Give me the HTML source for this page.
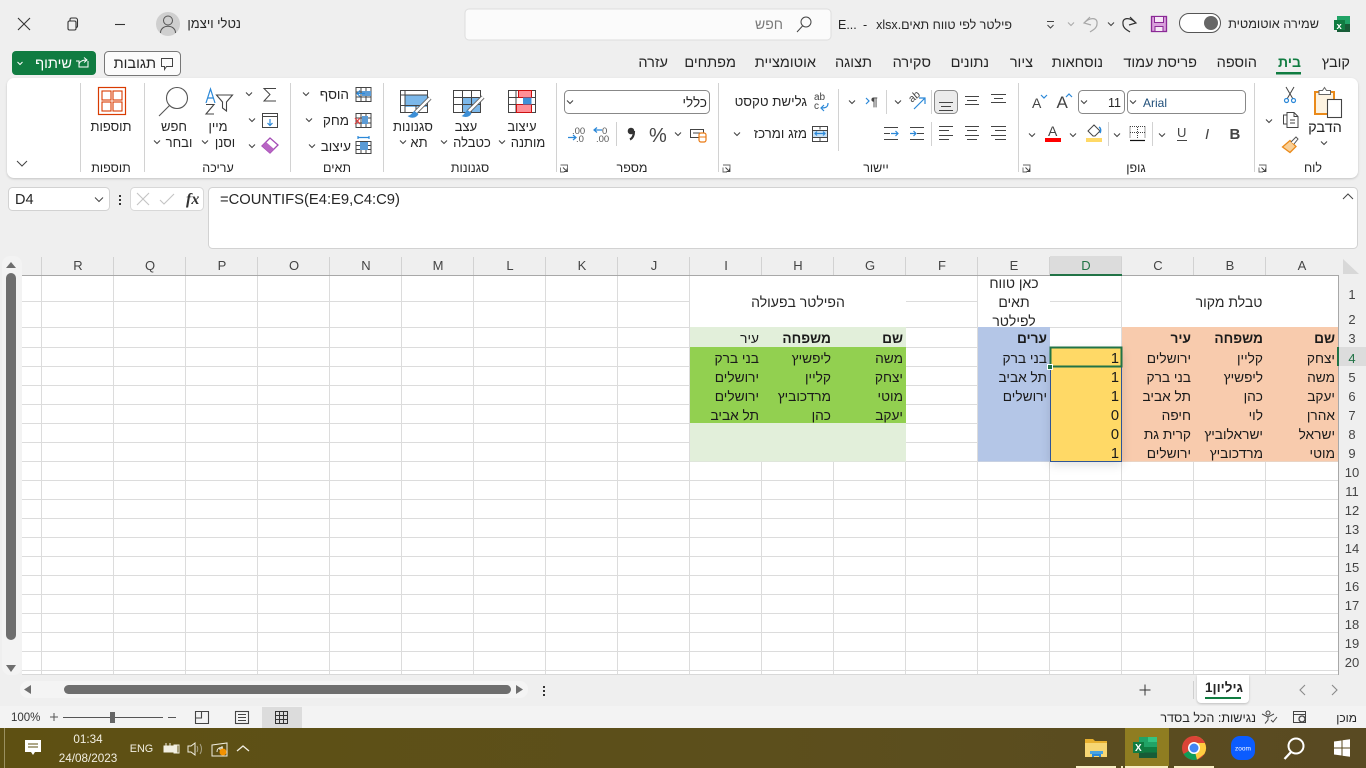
<!DOCTYPE html>
<html lang="he"><head><meta charset="utf-8"><title>Excel</title>
<style>
html,body{margin:0;padding:0;background:#efefef;width:1366px;height:768px;overflow:hidden}
svg{display:block;position:absolute;left:0;top:0}
text{font-family:"Liberation Sans","Noto Sans CJK SC",sans-serif;font-size:13px;fill:#262626;white-space:pre}
.r{direction:rtl;text-anchor:start}
.m{direction:rtl;text-anchor:middle}
.c{font-size:13.700px;fill:#1a1a1a;direction:rtl;text-anchor:start}
.n{font-size:14.700px;fill:#1a1a1a;direction:ltr;text-anchor:end}
.b{font-weight:bold}
.h{font-size:13px;fill:#444;text-anchor:middle;direction:ltr}
.t{font-size:14.500px;direction:rtl;text-anchor:start}
.l{font-size:12.500px;direction:rtl;text-anchor:middle}
.k{fill:none;stroke:#444;stroke-width:1}
.d{fill:none;stroke:#444;stroke-width:1.100}
.bl{fill:none;stroke:#2b88d8;stroke-width:1.200}
.w{font-size:11.700px;fill:#f2efe2;text-anchor:middle;direction:ltr}
</style></head><body>
<svg width="1366" height="768" viewBox="0 0 1366 768" xmlns="http://www.w3.org/2000/svg">
<defs>
<path id="v" d="M-3-1.500 0 1.500 3-1.500" fill="none" stroke="#444" stroke-width="1.100"/>
<g id="lau"><path d="M0 0h7v7M4 7H0V2.500" fill="none" stroke="#666" stroke-width=".9"/><path d="M2.500 2.500l4 4M3.500 6.500H6.500V3.500" fill="none" stroke="#444" stroke-width="1"/></g>
<linearGradient id="tb" x1="0" x2="1"><stop offset="0" stop-color="#5e5012"/><stop offset=".55" stop-color="#5c4f1c"/><stop offset="1" stop-color="#594a22"/></linearGradient>
</defs>
<rect width="1366" height="768" fill="#efefef"/>

<!-- title bar -->
<g fill="none" stroke="#333" stroke-width="1.100"><path d="M18 18l12 12M30 18 18 30"/><rect x="68" y="21" width="8" height="9" rx="1.500"/><path d="M70 21v-1.500a1.500 1.500 0 0 1 1.500-1.500h4a2 2 0 0 1 2 2v6a1.500 1.500 0 0 1-1.500 1.500"/><path d="M115 24.500h10"/></g>
<circle cx="168" cy="24" r="12" fill="#cfcfcf"/><circle cx="168" cy="20.500" r="4.500" fill="none" stroke="#555"/><path d="M160.500 33c0-9 15-9 15 0" fill="none" stroke="#555"/>
<text class="r" x="241" y="28">נטלי ויצמן</text>
<rect x="465" y="9" width="366" height="31" rx="4" fill="#fbfbfb" stroke="#dedede"/>
<text class="r" x="783" y="29" style="fill:#7a7a7a;font-size:14px">חפש</text>
<circle cx="806" cy="22" r="5" class="k"/><path d="M802.500 26l-5.500 6" class="k"/>
<text class="r" x="1012" y="29" style="font-size:12.500px">פילטר לפי טווח תאים.xlsx</text>
<text x="863" y="29" style="font-size:12.500px">-</text>
<text x="838" y="29" style="font-size:12.500px">E...</text>
<path d="M1047 21.500h7M1047.500 25l3 3 3-3" class="k"/>
<use href="#v" x="1071" y="24" style="opacity:.4"/>
<path d="M1090 17 1084 23l7 2M1084 23c6-6 14-6 13 1 0 4-4 6-7 8" fill="none" stroke="#a8a8a8" stroke-width="1.200"/>
<use href="#v" x="1111" y="24"/>
<path d="M1130 17 1136 23l-7 2M1136 23c-6-6-14-6-13 1 0 4 4 6 7 8" fill="none" stroke="#333" stroke-width="1.200"/>
<rect x="1151.500" y="16.500" width="15" height="15" fill="#d9a0dc" stroke="#8b2a96" stroke-width="1.300"/><rect x="1154.500" y="16.500" width="9" height="6" fill="#f6e8f7" stroke="#8b2a96"/><rect x="1155" y="26.500" width="8" height="5" fill="#f6e8f7" stroke="#8b2a96"/>
<rect x="1179.500" y="13.500" width="41" height="19" rx="9.500" fill="#fff" stroke="#555"/><circle cx="1211" cy="23" r="7" fill="#666"/>
<text class="r" x="1319" y="28" style="font-size:12.700px">שמירה אוטומטית</text>
<rect x="1337" y="16" width="13" height="16" fill="#21a366"/><rect x="1337" y="24" width="13" height="8" fill="#185c37"/><rect x="1334" y="20" width="11" height="10" fill="#107c41"/><text x="1336.500" y="29" style="font-size:9.500px;fill:#fff;font-weight:bold">x</text>

<!-- tabs -->
<g>
<text class="t" x="1350" y="67">קובץ</text>
<text class="t b" x="1301" y="67" style="fill:#107c41;font-size:14px">בית</text><rect x="1276" y="72" width="25" height="2.500" fill="#107c41"/>
<text class="t" x="1257" y="67">הוספה</text>
<text class="t" x="1197" y="67">פריסת עמוד</text>
<text class="t" x="1103" y="67">נוסחאות</text>
<text class="t" x="1033" y="67">ציור</text>
<text class="t" x="989" y="67">נתונים</text>
<text class="t" x="931" y="67">סקירה</text>
<text class="t" x="872" y="67">תצוגה</text>
<text class="t" x="816" y="67">אוטומציית</text>
<text class="t" x="736" y="67">מפתחים</text>
<text class="t" x="668" y="67">עזרה</text>
</g>
<rect x="12" y="51" width="84" height="24" rx="4" fill="#107c41"/>
<text class="r" x="72" y="68" style="fill:#fff;font-size:14.500px">שיתוף</text>
<path d="M76 61h3v6h9v-6M79 65c0-3 3-5 7-5M84 57.500l3 2.500-3 2.500" fill="none" stroke="#fff"/>
<path d="M17.500 62l2.500 2.500 2.500-2.500" fill="none" stroke="#fff"/>
<rect x="104.500" y="51.500" width="76" height="24" rx="4" fill="#fbfbfb" stroke="#777"/>
<text class="r" x="156" y="68" style="font-size:14.500px">תגובות</text>
<path d="M161.500 58.500h11v8h-6l-2 3v-3h-3z" class="k"/>

<!-- ribbon -->
<rect x="7" y="78" width="1351" height="100" rx="7" fill="#fff" filter="drop-shadow(0 1px 1px rgba(0,0,0,.18))"/>
<g stroke="#d2d2d2"><path d="M80.500 83v89M144.500 83v89M290.500 83v89M383.500 83v89M556.500 83v89M718.500 83v89M1018.500 83v89M1254.500 83v89"/></g>
<!-- group labels -->
<g><text class="l" x="111" y="172">תוספות</text><text class="l" x="218" y="172">עריכה</text><text class="l" x="337" y="172">תאים</text><text class="l" x="470" y="172">סגנונות</text><text class="l" x="632" y="172">מספר</text><text class="l" x="876" y="172">יישור</text><text class="l" x="1136" y="172">גופן</text><text class="l" x="1313" y="172">לוח</text></g>
<use href="#lau" x="560.500" y="165"/><use href="#lau" x="723" y="165"/><use href="#lau" x="1023" y="165"/><use href="#lau" x="1259" y="165"/>
<path d="M17 161l5 5 5-5" class="k"/>

<!-- add-ins -->
<rect x="98.500" y="87.500" width="27" height="27" fill="none" stroke="#d83b01" stroke-width="1.200"/><g fill="none" stroke="#d83b01" stroke-width="1.100"><rect x="102" y="91" width="9" height="9"/><rect x="113" y="91" width="9" height="9"/><rect x="102" y="102" width="9" height="9"/><rect x="113" y="102" width="9" height="9"/></g>
<text class="m" x="111" y="131">תוספות</text>

<!-- editing -->
<circle cx="177" cy="98" r="10.500" fill="none" stroke="#555" stroke-width="1.100"/><path d="M169.500 105.500 159 116" fill="none" stroke="#555" stroke-width="1.100"/>
<text class="m" x="174" y="131">חפש</text><text class="m" x="179" y="147">ובחר</text><use href="#v" x="157" y="142"/>
<path d="M206 103l4.500-14 4.500 14M207.500 98h6" class="bl"/><path d="M206 104.500h8l-8 9.500h8" fill="none" stroke="#444" stroke-width="1.100"/><path d="M216.500 95h16l-6 7v9l-4-3v-6z" fill="none" stroke="#444" stroke-width="1.100"/>
<text class="m" x="218" y="131">מיין</text><text class="m" x="225" y="147">וסנן</text><use href="#v" x="205" y="142"/>
<path d="M276 88.500h-12l6 6-6 6.500h12" class="k"/><use href="#v" x="249" y="94"/>
<rect x="262.500" y="113.500" width="15" height="14" class="k"/><path d="M262 116.500h16" class="k"/><path d="M270 119v6.500M267.500 123l2.500 2.500 2.500-2.500" class="bl"/><use href="#v" x="252" y="120"/>
<path d="M262 146l8-8 8 7-8 8z" fill="#fff" stroke="#a44bb5" stroke-width="1.300"/><path d="M262 146l4-4 8 7-4 4z" fill="#b865c4"/><use href="#v" x="252" y="146"/>

<!-- cells -->
<text class="r" x="349" y="99" style="font-size:13.500px">הוסף</text><text class="r" x="349" y="125" style="font-size:13.500px">מחק</text><text class="r" x="351" y="151" style="font-size:13.500px">עיצוב</text>
<use href="#v" x="306" y="94"/><use href="#v" x="309" y="120"/><use href="#v" x="312" y="146"/>
<path d="M356 87.500h15v14h-15zM356 92h15M356 97h15M361 88v13M366 88v13" class="k"/><rect x="362" y="91" width="9" height="5" fill="#5b9bd5"/><path d="M365 93.500h-8M360 90.500l-3 3 3 3" class="bl"/>
<path d="M356 113.500h15v14h-15zM361 114v13M366 114v13M356 118h15M356 123h15" class="k"/><rect x="362" y="116" width="6" height="8" fill="#5b9bd5"/><path d="M355 118l5 6M360 118l-5 6" fill="none" stroke="#e04040" stroke-width="1.200"/>
<path d="M356 141.500h15v12h-15zM361 142v11M366 142v11M356 145.500h15M356 149.500h15" class="k"/><rect x="360" y="142" width="8" height="8" fill="#5b9bd5"/><path d="M358 137.500h11M358 136v3M369 136v3" class="bl"/>

<!-- styles -->
<g>
<path d="M508.500 90.500h27v22h-27zM508.500 97.500h27M508.500 104.500h27M516 90.500v22M523.500 90.500v22" fill="none" stroke="#444"/>
<rect x="518.500" y="90.500" width="13" height="7" fill="#ff8f97" stroke="#c11"/><rect x="516.500" y="104.500" width="15" height="8" fill="#ff8f97" stroke="#c11"/><rect x="523" y="97.500" width="8.500" height="7" fill="#3f90d8"/>
<text class="m" x="522" y="131">עיצוב</text><text class="m" x="528" y="147">מותנה</text><use href="#v" x="502" y="142"/>
</g>
<g>
<rect x="463" y="97" width="18" height="15" fill="#7cb8ea"/>
<path d="M453.500 90.500h27v22h-27zM453.500 97.500h27M453.500 104.500h27M462.500 90.500v22M471.500 90.500v22" fill="none" stroke="#444"/>
<path d="M483 97l-15 15" stroke="#666" stroke-width="4.200"/><path d="M483 97l-15 15" stroke="#fff" stroke-width="2.400"/><path d="M467.500 110c-2 1-3 5-6 6 4 2 9 1 10-3z" fill="#3d8fd6"/>
<text class="m" x="466" y="131">עצב</text><text class="m" x="472" y="147">כטבלה</text><use href="#v" x="444" y="142"/>
</g>
<g>
<rect x="405" y="95" width="23" height="12" fill="#7cb8ea"/>
<path d="M400.500 90.500h27v22h-27zM400.500 95h27M400.500 105.500h27M405 90.500v22M416 106v6.500" fill="none" stroke="#444"/>
<path d="M430 98l-15 15" stroke="#666" stroke-width="4.200"/><path d="M430 98l-15 15" stroke="#fff" stroke-width="2.400"/><path d="M414.500 111c-2 1-3 4-7 5 4 3 9 2 11-2z" fill="#3d8fd6"/>
<text class="m" x="413" y="131">סגנונות</text><text class="m" x="419" y="147">תא</text><use href="#v" x="403" y="142"/>
</g>

<!-- number -->
<rect x="564.500" y="90.500" width="145" height="23" rx="4" fill="#fff" stroke="#888"/>
<text class="r" x="707" y="107" style="font-size:13.500px">כללי</text><use href="#v" x="570" y="102"/>
<text x="572" y="134" style="font-size:9.500px;fill:#555">.00</text><text x="576" y="142" style="font-size:9.500px;fill:#555">.0</text><path d="M568 137.500h8M573 135l3 2.500-3 2.500" class="bl"/>
<text x="602" y="134" style="font-size:9.500px;fill:#555">0</text><text x="596" y="142" style="font-size:9.500px;fill:#555">.00</text><path d="M602 130h-8M597 127.500l-3 2.500 3 2.500" class="bl"/>
<path d="M616.500 122v24" stroke="#d0d0d0"/>
<circle cx="631" cy="131" r="3.300" fill="#333"/><path d="M634 131c0 4-1 7-4 8.500" fill="none" stroke="#333" stroke-width="2.200"/>
<text x="649" y="142" style="font-size:20px;fill:#444">%</text>
<use href="#v" x="678" y="134"/>
<rect x="690.500" y="129.500" width="13" height="8" class="k"/><path d="M693 133h8" class="k"/><rect x="699" y="133" width="7" height="9" rx="2" fill="#fff" stroke="#ea7a14" stroke-width="1.200"/><path d="M699 137h7" stroke="#ea7a14"/>

<!-- alignment -->
<text class="r" x="807" y="106" style="font-size:13.300px">גלישת טקסט</text>
<text x="814" y="100" style="font-size:10px;fill:#444">ab</text><text x="814" y="109" style="font-size:10px;fill:#444">c</text><path d="M828 103c0 4-2 5-7 5M824 105l-3 3 3 3" class="bl"/>
<text class="r" x="807" y="138" style="font-size:13.300px">מזג ומרכז</text>
<rect x="812.500" y="126.500" width="15" height="15" fill="#fff" stroke="#444"/><rect x="813" y="130" width="14" height="7" fill="#c7e0f4"/><path d="M812 130.500h16M812 137.500h16M820 126.500v3M820 137.500v4" class="k"/><path d="M815 133.500h10M817 131.500l-2 2 2 2M823 131.500l2 2-2 2" class="bl"/>
<use href="#v" x="737" y="134"/>
<path d="M838.500 89v62" stroke="#d2d2d2"/>
<use href="#v" x="852" y="102"/>
<text x="871" y="106" style="font-size:12px;font-weight:bold;fill:#444">¶</text><path d="M866 98l3 3-3 3" class="bl"/>
<path d="M886.500 90v24" stroke="#d2d2d2"/>
<use href="#v" x="898" y="102"/>
<text x="909" y="101" style="font-size:10.500px;fill:#444" transform="rotate(-40 913 98)">ab</text><path d="M914 109l11-11M919 98h6v6" class="bl"/>
<path d="M931.500 90v24M931.500 122v24" stroke="#d2d2d2"/>
<rect x="934.500" y="90.500" width="23" height="23" rx="4" fill="#ebebeb" stroke="#8a8a8a"/>
<path d="M939 102.500h14M941 106.500h10M939 110.500h14" class="d"/>
<path d="M965 96.500h14M967 100.500h10M965 104.500h14" class="d"/>
<path d="M991 94.500h15M994 98.500h9M991 102.500h15" class="d"/>
<path d="M991 126.500h15M995 130.500h11M991 135.500h15M995 139.500h11" class="d"/>
<path d="M965 126.500h14M967 130.500h10M965 135.500h14M967 139.500h10" class="d"/>
<path d="M939 126.500h14M939 130.500h10M939 135.500h14M939 139.500h10" class="d"/>
<path d="M910 127.500h14M917 133.500h7M910 139.500h14" class="d"/><path d="M910 133.500h6M913.500 131l2.500 2.500-2.500 2.500" class="bl"/>
<path d="M884 127.500h14M884 133.500h6M884 139.500h14" class="d"/><path d="M891 133.500h7M895.500 131l2.500 2.500-2.500 2.500" class="bl"/>

<!-- font -->
<rect x="1127.500" y="90.500" width="118" height="23" rx="4" fill="#fff" stroke="#888"/>
<text x="1143" y="107" style="font-size:12px;fill:#1f4e79">Arial</text><use href="#v" x="1133" y="102"/>
<rect x="1078.500" y="90.500" width="46" height="23" rx="4" fill="#fff" stroke="#888"/>
<text x="1108" y="107" style="font-size:12.500px">11</text><use href="#v" x="1084" y="102"/>
<text x="1056.500" y="108" style="font-size:17px;fill:#444">A</text><path d="M1066 97l3-3 3 3" class="bl"/>
<text x="1032" y="108" style="font-size:14px;fill:#444">A</text><path d="M1041 95l3 3 3-3" class="bl"/>
<text x="1229.500" y="139" style="font-size:15px;font-weight:bold;fill:#444">B</text>
<text x="1205" y="139" style="font-size:15px;font-style:italic;fill:#444">I</text>
<text x="1177" y="137" style="font-size:13px;fill:#444">U</text><path d="M1177 140.500h10" class="k"/>
<use href="#v" x="1162" y="135"/>
<path d="M1152.500 122v24" stroke="#d2d2d2"/>
<path d="M1130 126.500h15M1130 126.500v12M1145 126.500v12M1137.500 127v12M1130 132.500h15" fill="none" stroke="#444" stroke-dasharray="1 1"/><path d="M1130 140.500h15" stroke="#111" stroke-width="1.200"/>
<use href="#v" x="1117" y="135"/>
<path d="M1108.500 122v24" stroke="#d2d2d2"/>
<path d="M1088 131l6-6 6 6-5 5-2 0z" class="k"/><path d="M1099 127c2 1 2 4 1 6" stroke="#2b88d8" stroke-width="1.500" fill="none"/><rect x="1086" y="138" width="16" height="4" fill="#ffd966"/>
<use href="#v" x="1073" y="135"/>
<text x="1048" y="136" style="font-size:14px;fill:#444">A</text><rect x="1045" y="138" width="16" height="4" fill="#f00"/>
<use href="#v" x="1032" y="135"/>

<!-- clipboard -->
<rect x="1315" y="92" width="19" height="22" fill="#fdf3e1" stroke="#ea8a1a" stroke-width="2"/>
<path d="M1319 94.500v-4h3.500l2-3 2 3h4v4z" fill="#fff" stroke="#666"/>
<rect x="1327.500" y="99.500" width="14" height="18" fill="#fff" stroke="#444" stroke-width="1.100"/>
<text class="m" x="1325" y="132" style="font-size:14.500px">הדבק</text><use href="#v" x="1324" y="143"/>
<path d="M1286 87l7 12M1294 87l-7 12" class="k"/><circle cx="1286.500" cy="100.500" r="2" class="bl"/><circle cx="1293.500" cy="100.500" r="2" class="bl"/>
<path d="M1287 115h-3.500v9h3.500M1287 112.500h7l4 4v11h-11zM1294 112.500v4h4" class="k"/><path d="M1290 120h5M1290 123h5" class="k"/>
<use href="#v" x="1269" y="121"/>
<path d="M1282.500 147l7.500-6.500 6 6-6 6z" fill="#f9cf96" stroke="#ea8a1a" stroke-width="1.300"/><path d="M1291 142l5-5 2 2-4 5" fill="#fff" stroke="#555"/>

<!-- formula bar -->
<rect x="8.500" y="187.500" width="101" height="23" rx="4" fill="#fff" stroke="#d2d2d2"/>
<text x="15" y="204" style="font-size:14.500px">D4</text><path d="M95 197.500l4 4 4-4" class="k"/>
<g fill="#333"><rect x="119" y="195" width="2" height="2"/><rect x="119" y="199" width="2" height="2"/><rect x="119" y="203" width="2" height="2"/></g>
<rect x="130.500" y="187.500" width="73" height="23" rx="4" fill="#fff" stroke="#d8d8d8"/>
<path d="M137 193l12 12M149 193l-12 12M160 200l4 4 10-10" fill="none" stroke="#c4c4c4" stroke-width="1.100"/>
<text x="186" y="204" style="font-family:'Liberation Serif',serif;font-size:16px;font-style:italic;font-weight:bold;fill:#333">fx</text>
<rect x="208.500" y="187.500" width="1149" height="61" rx="4" fill="#fff" stroke="#d2d2d2"/>
<text x="220" y="204" style="font-size:14.750px">=COUNTIFS(E4:E9,C4:C9)</text>
<path d="M1343 199l5-5 5 5" class="k"/>

<!-- grid -->
<rect x="22" y="276" width="1316" height="398" fill="#fff"/>
<path fill="none" stroke="#dcdcdc" d="M41.500 256v418M113.500 256v418M185.500 256v418M257.500 256v418M329.500 256v418M401.500 256v418M473.500 256v418M545.500 256v418M617.500 256v418M689.500 256v418M761.500 256v418M833.500 256v418M905.500 256v418M977.500 256v418M1049.500 256v418M1121.500 256v418M1193.500 256v418M1265.500 256v418"/>
<path fill="none" stroke="#dcdcdc" d="M22 301.500h1316M22 327.500h1316M22 347.500h1316M22 366.500h1316M22 385.500h1316M22 404.500h1316M22 423.500h1316M22 442.500h1316M22 461.500h1316M22 480.500h1316M22 499.500h1316M22 518.500h1316M22 537.500h1316M22 556.500h1316M22 575.500h1316M22 594.500h1316M22 613.500h1316M22 632.500h1316M22 651.500h1316M22 670.500h1316"/>
<!-- merged -->
<rect x="1122" y="276" width="216" height="51" fill="#fff"/><rect x="690" y="276" width="216" height="51" fill="#fff"/><rect x="978" y="276" width="72" height="51" fill="#fff"/>
<!-- fills -->
<rect x="1122" y="327" width="216" height="134.500" fill="#f8cbad"/>
<rect x="978" y="327" width="72" height="134.500" fill="#b4c6e7"/>
<rect x="690" y="327" width="216" height="20" fill="#e2efda"/>
<rect x="690" y="347" width="216" height="76" fill="#92d050"/>
<rect x="690" y="423" width="216" height="38.500" fill="#e2efda"/>
<rect x="1050.500" y="347.500" width="71" height="114" fill="#ffd966" stroke="#2f5597" stroke-width="1" filter="drop-shadow(0 3px 5px rgba(0,0,0,.12))"/>
<rect x="1050.500" y="347.500" width="71" height="19" fill="#ffd966" stroke="#217346" stroke-width="2"/>
<rect x="1047.500" y="364.500" width="5" height="5" fill="#217346" stroke="#fff"/>

<!-- headers -->
<rect x="0" y="256" width="1366" height="19.500" fill="#efefef"/>
<rect x="1338" y="275" width="28" height="400" fill="#efefef"/>
<rect x="1050" y="256" width="72" height="19" fill="#dcdcdc"/>
<rect x="1338" y="347" width="28" height="19" fill="#dcdcdc"/>
<path stroke="#d2d2d2" fill="none" d="M41.500 257v18M113.500 257v18M185.500 257v18M257.500 257v18M329.500 257v18M401.500 257v18M473.500 257v18M545.500 257v18M617.500 257v18M689.500 257v18M761.500 257v18M833.500 257v18M905.500 257v18M977.500 257v18M1049.500 257v18M1121.500 257v18M1193.500 257v18M1265.500 257v18"/>
<path d="M22 275.500h1316" stroke="#a8a8a8"/><path d="M1338.500 275v400" stroke="#a8a8a8"/>
<path d="M1050 275h72" stroke="#217346" stroke-width="2"/><path d="M1338 347v19" stroke="#217346" stroke-width="2"/>
<path d="M1343 259v15h16z" fill="#d8d8d8"/>
<g>
<text class="h" x="78" y="270">R</text><text class="h" x="150" y="270">Q</text><text class="h" x="222" y="270">P</text><text class="h" x="294" y="270">O</text><text class="h" x="366" y="270">N</text><text class="h" x="438" y="270">M</text><text class="h" x="510" y="270">L</text><text class="h" x="582" y="270">K</text><text class="h" x="654" y="270">J</text><text class="h" x="726" y="270">I</text><text class="h" x="798" y="270">H</text><text class="h" x="870" y="270">G</text><text class="h" x="942" y="270">F</text><text class="h" x="1014" y="270">E</text><text class="h" x="1086" y="270" style="fill:#217346">D</text><text class="h" x="1158" y="270">C</text><text class="h" x="1230" y="270">B</text><text class="h" x="1302" y="270">A</text>
<text class="h" x="1352" y="299">1</text><text class="h" x="1352" y="324">2</text><text class="h" x="1352" y="343">3</text><text class="h" x="1352" y="363" style="fill:#217346">4</text><text class="h" x="1352" y="382">5</text><text class="h" x="1352" y="401">6</text><text class="h" x="1352" y="420">7</text><text class="h" x="1352" y="439">8</text><text class="h" x="1352" y="458">9</text><text class="h" x="1352" y="477">10</text><text class="h" x="1352" y="496">11</text><text class="h" x="1352" y="515">12</text><text class="h" x="1352" y="534">13</text><text class="h" x="1352" y="553">14</text><text class="h" x="1352" y="572">15</text><text class="h" x="1352" y="591">16</text><text class="h" x="1352" y="610">17</text><text class="h" x="1352" y="629">18</text><text class="h" x="1352" y="648">19</text><text class="h" x="1352" y="667">20</text>
</g>

<!-- cells -->
<g>
<text class="m" x="1229" y="307" style="font-size:14px">טבלת מקור</text>
<text class="m" x="798" y="307" style="font-size:14px">הפילטר בפעולה</text>
<text class="m" x="1014" y="288" style="font-size:14px">כאן טווח</text><text class="m" x="1014" y="307" style="font-size:14px">תאים</text><text class="m" x="1014" y="326" style="font-size:14px">לפילטר</text>

<text class="c b" x="1335" y="343">שם</text><text class="c b" x="1263" y="343">משפחה</text><text class="c b" x="1191" y="343">עיר</text>
<text class="c" x="1335" y="363">יצחק</text><text class="c" x="1263" y="363">קליין</text><text class="c" x="1191" y="363">ירושלים</text>
<text class="c" x="1335" y="382">משה</text><text class="c" x="1263" y="382">ליפשיץ</text><text class="c" x="1191" y="382">בני ברק</text>
<text class="c" x="1335" y="401">יעקב</text><text class="c" x="1263" y="401">כהן</text><text class="c" x="1191" y="401">תל אביב</text>
<text class="c" x="1335" y="420">אהרן</text><text class="c" x="1263" y="420">לוי</text><text class="c" x="1191" y="420">חיפה</text>
<text class="c" x="1335" y="439">ישראל</text><text class="c" x="1263" y="439">ישראלוביץ</text><text class="c" x="1191" y="439">קרית גת</text>
<text class="c" x="1335" y="458">מוטי</text><text class="c" x="1263" y="458">מרדכוביץ</text><text class="c" x="1191" y="458">ירושלים</text>

<text class="n" x="1119" y="363">1</text><text class="n" x="1119" y="382">1</text><text class="n" x="1119" y="401">1</text><text class="n" x="1119" y="420">0</text><text class="n" x="1119" y="439">0</text><text class="n" x="1119" y="458">1</text>

<text class="c b" x="1047" y="343">ערים</text><text class="c" x="1047" y="363">בני ברק</text><text class="c" x="1047" y="382">תל אביב</text><text class="c" x="1047" y="401">ירושלים</text>

<text class="c b" x="903" y="343">שם</text><text class="c b" x="831" y="343">משפחה</text><text class="c" x="759" y="343">עיר</text>
<text class="c" x="903" y="363">משה</text><text class="c" x="831" y="363">ליפשיץ</text><text class="c" x="759" y="363">בני ברק</text>
<text class="c" x="903" y="382">יצחק</text><text class="c" x="831" y="382">קליין</text><text class="c" x="759" y="382">ירושלים</text>
<text class="c" x="903" y="401">מוטי</text><text class="c" x="831" y="401">מרדכוביץ</text><text class="c" x="759" y="401">ירושלים</text>
<text class="c" x="903" y="420">יעקב</text><text class="c" x="831" y="420">כהן</text><text class="c" x="759" y="420">תל אביב</text>
</g>

<!-- vertical scrollbar -->
<rect x="2" y="256" width="20" height="419" rx="8" fill="#f3f3f3"/>
<path d="M6 268l5-6 5 6z" fill="#6e6e6e"/>
<rect x="6" y="273" width="10" height="367" rx="5" fill="#6e6e6e"/>
<path d="M6 665l5 7 5-7z" fill="#6e6e6e"/>
<path d="M22 674.500h1316" stroke="#d8d8d8"/>

<!-- sheet bar -->
<rect x="0" y="675" width="1366" height="31" fill="#efefef"/>
<rect x="20" y="681" width="508" height="17" rx="8" fill="#f4f4f4"/>
<path d="M31 685v9l-7-4.500z" fill="#6e6e6e"/><path d="M516 685v9l7-4.500z" fill="#6e6e6e"/>
<rect x="64" y="685" width="447" height="9" rx="4.500" fill="#6e6e6e"/>
<g fill="#333"><rect x="543" y="686" width="2" height="2"/><rect x="543" y="690" width="2" height="2"/><rect x="543" y="694" width="2" height="2"/></g>
<path d="M1145 684.500v11M1139.500 690h11" stroke="#333"/>
<path d="M1193.500 681v18" stroke="#cfcfcf"/>
<path d="M1197 675h52v24a4 4 0 0 1-4 4h-44a4 4 0 0 1-4-4z" fill="#fff" filter="drop-shadow(0 1px 1px rgba(0,0,0,.2))"/>
<text class="m" x="1224" y="692" style="font-weight:bold;font-size:13.500px">גיליון1</text>
<rect x="1205" y="697" width="36" height="2" fill="#107c41"/>
<path d="M1305 685l-5 5 5 5" fill="none" stroke="#8a8a8a" stroke-width="1.100"/><path d="M1332 685l5 5-5 5" fill="none" stroke="#8a8a8a" stroke-width="1.100"/>

<!-- status bar -->
<rect x="0" y="706" width="1366" height="22" fill="#f3f3f3"/>
<text x="11" y="721" style="font-size:11.500px;fill:#333">100%</text>
<path d="M50 717h8M54 713v8M63 717.500h100M168 717.500h8" stroke="#555" fill="none"/>
<rect x="110" y="712" width="5" height="11" fill="#666"/>
<path d="M195.500 711.500h13v12h-13zM201.500 712v6h-6" class="d"/>
<rect x="235.500" y="711.500" width="13" height="12" class="d"/><path d="M238 714.500h8M238 717.500h8M238 720.500h8" class="k"/>
<rect x="262" y="707" width="40" height="21" fill="#dcdcdc"/>
<path d="M275.500 711.500h12v12h-12zM275.500 715.500h12M275.500 719.500h12M279.500 711.500v12M283.500 711.500v12" fill="none" stroke="#333"/>
<text class="r" x="1357" y="722" style="font-size:12px">מוכן</text>
<rect x="1293.500" y="711.500" width="12" height="11" class="k"/><circle cx="1302" cy="719" r="3" fill="#f3f3f3" stroke="#444" stroke-width="1.300"/><path d="M1294 714.500h11" class="k"/>
<circle cx="1268" cy="713" r="2" class="k"/><path d="M1262 714l6 3 6-3M1268 717v3l-3 3.500M1271 720l2 2 4-5" class="k"/>
<text class="r" x="1256" y="722" style="font-size:12.600px">נגישות: הכל בסדר</text>

<!-- taskbar -->
<rect x="0" y="728" width="1366" height="40" fill="url(#tb)"/>
<path d="M4.500 728v40" stroke="#9a9060"/>
<path d="M25 740h16v12h-6l-2 3-2-3h-6z" fill="#fff"/><path d="M28 744h10M28 747h10" stroke="#5c4f12"/>
<text class="w" x="88" y="743">01:34</text><text class="w" x="88" y="762">24/08/2023</text>
<text class="w" x="141.500" y="752" style="font-size:10.800px">ENG</text>
<path d="M164 746h13v6h-13z" fill="#f2efe2" stroke="#f2efe2"/><rect x="174" y="745" width="5" height="8" fill="none" stroke="#f2efe2"/><path d="M166 743v4M170 743v4" stroke="#f2efe2"/>
<path d="M188 746v6h3l4 3v-12l-4 3z" fill="none" stroke="#f2efe2"/><path d="M197 746c1 2 1 4 0 6M200 744c2 3 2 7 0 10" fill="none" stroke="#a9a388"/>
<path d="M212 745l15-2v13h-15z" fill="none" stroke="#f2efe2"/><path d="M217 752c0-4 3-5 6-4M222 746v3h-3" fill="none" stroke="#f2efe2"/>
<circle cx="223" cy="752" r="3.500" fill="#f39200"/>
<path d="M237 751l6-5 6 5" fill="none" stroke="#f2efe2" stroke-width="1.300"/>

<path d="M1085 739h8l2 2h12v6h-22z" fill="#e8b02e"/><rect x="1085" y="743" width="22" height="14" fill="#f7d673"/><path d="M1092 754h9v3h-2v-1h-5v1h-2z" fill="#2b88d8"/><rect x="1090" y="751" width="13" height="3" fill="#4aa3df"/>
<rect x="1125" y="728" width="44" height="38" fill="#8f7d21"/>
<rect x="1139" y="737" width="18" height="21" fill="#21a366"/><rect x="1148" y="737" width="9" height="5" fill="#33c481"/><rect x="1139" y="747" width="18" height="5.500" fill="#107c41"/><rect x="1139" y="752.500" width="18" height="5.500" fill="#185c37"/>
<rect x="1133" y="742" width="11" height="11" fill="#107c41"/><text x="1135" y="751" style="font-size:10px;font-weight:bold;fill:#fff">X</text>
<circle cx="1194" cy="748" r="12" fill="#db4437"/><path d="M1194 748l-10.400 6A12 12 0 0 0 1197 759.600z" fill="#0f9d58"/><path d="M1194 736a12 12 0 0 1 10.400 18L1197 759.600 1194 748z" fill="#ffcd40"/><path d="M1194 736a12 12 0 0 1 11 7h-11z" fill="#db4437"/><circle cx="1194" cy="748" r="6" fill="#fff"/><circle cx="1194" cy="748" r="4.500" fill="#4285f4"/>
<rect x="1231" y="736" width="24" height="24" rx="9" fill="#0b5cff"/><text class="w" x="1243" y="750.500" style="font-size:6.500px;fill:#fff">zoom</text>
<circle cx="1296" cy="746" r="7.500" fill="none" stroke="#fff" stroke-width="2"/><path d="M1291 752l-6.500 7" stroke="#fff" stroke-width="2.300"/>
<path d="M1334 741.500l7.500-1v7h-7.500zM1342.500 740.300l7.500-1v8.200h-7.500zM1334 748.500h7.500v7l-7.500-1zM1342.500 748.500h7.500v8.200l-7.500-1z" fill="#fff"/>
<g fill="#f7efc4"><rect x="1076" y="766" width="40" height="2"/><rect x="1121" y="766" width="2" height="2"/><rect x="1125" y="766" width="43" height="2"/><rect x="1174" y="766" width="40" height="2"/></g>
</svg>
</body></html>
